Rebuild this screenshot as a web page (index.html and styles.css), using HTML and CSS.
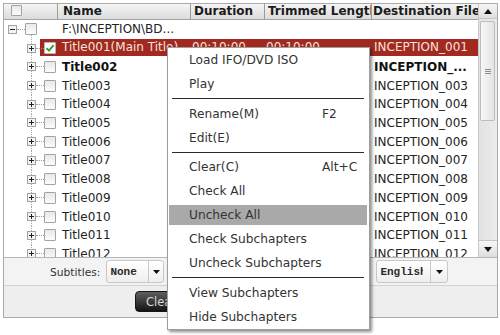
FILE: index.html
```html
<!DOCTYPE html>
<html>
<head>
<meta charset="utf-8">
<title>Titles</title>
<link rel="stylesheet" href="styles.css">
</head>
<body>
<div class="panel">
  <div class="grid">
    <div class="table">
      <div class="head">
        <div class="hc hc-check"><span class="cb"></span></div>
        <div class="hc">Name</div>
        <div class="hc">Duration</div>
        <div class="hc">Trimmed Length</div>
        <div class="hc">Destination File</div>
      </div>
      <div class="rows">
        <div class="row root">
          <div class="c0"><svg class="tg" width="9" height="9" viewBox="0 0 9 9"><rect x=".5" y=".5" width="8" height="8" fill="#f3f3f3" stroke="#a2a2a2"/><path d="M2 4.5h5" stroke="#222"/></svg><span class="dash"></span><span class="cb"></span></div>
          <div class="c name">F:\INCEPTION\BD...</div>
          <div class="c"></div><div class="c"></div><div class="c"></div>
        </div>
        <div class="row child sel">
          <div class="c0"><svg class="tg" width="9" height="9" viewBox="0 0 9 9"><rect x=".5" y=".5" width="8" height="8" fill="#f3f3f3" stroke="#a2a2a2"/><path d="M2 4.5h5M4.5 2v5" stroke="#222"/></svg><span class="dash"></span><span class="cb on"><svg width="10" height="10" viewBox="0 0 10 10"><path d="M1.6 5.2 L4 7.6 L8.6 2.2" stroke="#3f9e2e" stroke-width="2" fill="none"/></svg></span></div>
          <div class="c name">Title001(Main Title)</div>
          <div class="c">00:10:00</div>
          <div class="c">00:10:00</div>
          <div class="c dest">INCEPTION_001</div>
        </div>
        <div class="row child bold">
          <div class="c0"><svg class="tg" width="9" height="9" viewBox="0 0 9 9"><rect x=".5" y=".5" width="8" height="8" fill="#f3f3f3" stroke="#a2a2a2"/><path d="M2 4.5h5M4.5 2v5" stroke="#222"/></svg><span class="dash"></span><span class="cb"></span></div>
          <div class="c name">Title002</div><div class="c"></div><div class="c"></div>
          <div class="c dest">INCEPTION_...</div>
        </div>
        <div class="row child">
          <div class="c0"><svg class="tg" width="9" height="9" viewBox="0 0 9 9"><rect x=".5" y=".5" width="8" height="8" fill="#f3f3f3" stroke="#a2a2a2"/><path d="M2 4.5h5M4.5 2v5" stroke="#222"/></svg><span class="dash"></span><span class="cb"></span></div>
          <div class="c name">Title003</div><div class="c"></div><div class="c"></div>
          <div class="c dest">INCEPTION_003</div>
        </div>
        <div class="row child">
          <div class="c0"><svg class="tg" width="9" height="9" viewBox="0 0 9 9"><rect x=".5" y=".5" width="8" height="8" fill="#f3f3f3" stroke="#a2a2a2"/><path d="M2 4.5h5M4.5 2v5" stroke="#222"/></svg><span class="dash"></span><span class="cb"></span></div>
          <div class="c name">Title004</div><div class="c"></div><div class="c"></div>
          <div class="c dest">INCEPTION_004</div>
        </div>
        <div class="row child">
          <div class="c0"><svg class="tg" width="9" height="9" viewBox="0 0 9 9"><rect x=".5" y=".5" width="8" height="8" fill="#f3f3f3" stroke="#a2a2a2"/><path d="M2 4.5h5M4.5 2v5" stroke="#222"/></svg><span class="dash"></span><span class="cb"></span></div>
          <div class="c name">Title005</div><div class="c"></div><div class="c"></div>
          <div class="c dest">INCEPTION_005</div>
        </div>
        <div class="row child">
          <div class="c0"><svg class="tg" width="9" height="9" viewBox="0 0 9 9"><rect x=".5" y=".5" width="8" height="8" fill="#f3f3f3" stroke="#a2a2a2"/><path d="M2 4.5h5M4.5 2v5" stroke="#222"/></svg><span class="dash"></span><span class="cb"></span></div>
          <div class="c name">Title006</div><div class="c"></div><div class="c"></div>
          <div class="c dest">INCEPTION_006</div>
        </div>
        <div class="row child">
          <div class="c0"><svg class="tg" width="9" height="9" viewBox="0 0 9 9"><rect x=".5" y=".5" width="8" height="8" fill="#f3f3f3" stroke="#a2a2a2"/><path d="M2 4.5h5M4.5 2v5" stroke="#222"/></svg><span class="dash"></span><span class="cb"></span></div>
          <div class="c name">Title007</div><div class="c"></div><div class="c"></div>
          <div class="c dest">INCEPTION_007</div>
        </div>
        <div class="row child">
          <div class="c0"><svg class="tg" width="9" height="9" viewBox="0 0 9 9"><rect x=".5" y=".5" width="8" height="8" fill="#f3f3f3" stroke="#a2a2a2"/><path d="M2 4.5h5M4.5 2v5" stroke="#222"/></svg><span class="dash"></span><span class="cb"></span></div>
          <div class="c name">Title008</div><div class="c"></div><div class="c"></div>
          <div class="c dest">INCEPTION_008</div>
        </div>
        <div class="row child">
          <div class="c0"><svg class="tg" width="9" height="9" viewBox="0 0 9 9"><rect x=".5" y=".5" width="8" height="8" fill="#f3f3f3" stroke="#a2a2a2"/><path d="M2 4.5h5M4.5 2v5" stroke="#222"/></svg><span class="dash"></span><span class="cb"></span></div>
          <div class="c name">Title009</div><div class="c"></div><div class="c"></div>
          <div class="c dest">INCEPTION_009</div>
        </div>
        <div class="row child">
          <div class="c0"><svg class="tg" width="9" height="9" viewBox="0 0 9 9"><rect x=".5" y=".5" width="8" height="8" fill="#f3f3f3" stroke="#a2a2a2"/><path d="M2 4.5h5M4.5 2v5" stroke="#222"/></svg><span class="dash"></span><span class="cb"></span></div>
          <div class="c name">Title010</div><div class="c"></div><div class="c"></div>
          <div class="c dest">INCEPTION_010</div>
        </div>
        <div class="row child">
          <div class="c0"><svg class="tg" width="9" height="9" viewBox="0 0 9 9"><rect x=".5" y=".5" width="8" height="8" fill="#f3f3f3" stroke="#a2a2a2"/><path d="M2 4.5h5M4.5 2v5" stroke="#222"/></svg><span class="dash"></span><span class="cb"></span></div>
          <div class="c name">Title011</div><div class="c"></div><div class="c"></div>
          <div class="c dest">INCEPTION_011</div>
        </div>
        <div class="row child">
          <div class="c0"><svg class="tg" width="9" height="9" viewBox="0 0 9 9"><rect x=".5" y=".5" width="8" height="8" fill="#f3f3f3" stroke="#a2a2a2"/><path d="M2 4.5h5M4.5 2v5" stroke="#222"/></svg><span class="dash"></span><span class="cb"></span></div>
          <div class="c name">Title012</div><div class="c"></div><div class="c"></div>
          <div class="c dest">INCEPTION_012</div>
        </div>
        <div class="row child">
          <div class="c0"><svg class="tg" width="9" height="9" viewBox="0 0 9 9"><rect x=".5" y=".5" width="8" height="8" fill="#f3f3f3" stroke="#a2a2a2"/><path d="M2 4.5h5M4.5 2v5" stroke="#222"/></svg><span class="dash"></span><span class="cb"></span></div>
          <div class="c name">Title013</div><div class="c"></div><div class="c"></div>
          <div class="c dest">INCEPTION_013</div>
        </div>
      </div>
    </div>
    <div class="vscroll">
      <div class="sbtn"><svg width="8" height="5" viewBox="0 0 8 5"><polygon points="0,5 8,5 4,0" fill="#111"/></svg></div>
      <div class="track">
        <div class="thumb"><svg width="6" height="5" viewBox="0 0 6 5"><path d="M0 .5h6M0 2.5h6M0 4.5h6" stroke="#8c8c8c"/></svg></div>
      </div>
      <div class="sbtn down"><svg width="8" height="5" viewBox="0 0 8 5"><polygon points="0,0 8,0 4,5" fill="#111"/></svg></div>
    </div>
  </div>
  <div class="toolbar">
    <span class="lbl">Subtitles:</span>
    <div class="dd dd-sub"><div class="dd-val"><span>None</span></div><div class="dd-arr"><svg width="7" height="4" viewBox="0 0 7 4"><polygon points="0,0 7,0 3.5,4" fill="#111"/></svg></div></div>
    <div class="dd dd-aud"><div class="dd-val"><span>English</span></div><div class="dd-arr"><svg width="7" height="4" viewBox="0 0 7 4"><polygon points="0,0 7,0 3.5,4" fill="#111"/></svg></div></div>
  </div>
  <div class="actions">
    <button class="btn">Clear</button>
  </div>
</div>

<div class="menu">
  <div class="mi"><span>Load IFO/DVD ISO</span></div>
  <div class="mi"><span>Play</span></div>
  <div class="msep"></div>
  <div class="mi"><span>Rename(M)</span><span>F2</span></div>
  <div class="mi"><span>Edit(E)</span></div>
  <div class="msep"></div>
  <div class="mi"><span>Clear(C)</span><span>Alt+C</span></div>
  <div class="mi"><span>Check All</span></div>
  <div class="mi hot"><span>Uncheck All</span></div>
  <div class="mi"><span>Check Subchapters</span></div>
  <div class="mi"><span>Uncheck Subchapters</span></div>
  <div class="msep"></div>
  <div class="mi"><span>View Subchapters</span></div>
  <div class="mi"><span>Hide Subchapters</span></div>
</div>
</body>
</html>
```

FILE: styles.css
```css
* { box-sizing: border-box; }
html, body { margin: 0; padding: 0; background: #fff; }
body {
  width: 500px; height: 335px; overflow: hidden; position: relative;
  font-family: "DejaVu Sans", Verdana, sans-serif; color: #222;
}
.panel {
  margin: 3px; width: 495px; height: 315px;
  border: 1px solid #aaaaaa; background: #f1f1f1;
  display: flex; flex-direction: column;
}
.grid { display: flex; height: 254px; border-bottom: 1px solid #b6b6b6; background: #fff; }
.table { width: 474px; display: flex; flex-direction: column; overflow: hidden; }

.head {
  display: grid; grid-template-columns: 53px 133px 74px 107px 107px;
  height: 16px; border-bottom: 1px solid #a4a4a4;
  background: linear-gradient(#f5f5f5, #dcdcdc);
}
.hc {
  font-weight: bold; font-size: 12px; line-height: 15px; color: #1c1c1c;
  border-left: 1px solid #9c9c9c; white-space: nowrap; overflow: hidden;
  padding-left: 3px;
}
.hc:nth-child(2) { padding-left: 5px; }
.hc:nth-child(3) { padding-left: 3px; }
.hc:nth-child(5) { padding-left: 1px; }
.hc-check { border-left: 0; padding: 1px 0 0 7px; display: flex; align-items: flex-start; }
.hc-check .cb { width: 11px; height: 11px; }

.rows { flex: 1; overflow: hidden; }
.row {
  display: grid; grid-template-columns: 53px 133px 74px 107px 107px;
  height: 18.72px; font-size: 12px;
}
.c { display: flex; align-items: center; white-space: nowrap; overflow: hidden; color: #232323; padding-left: 2px; }
.c.name { padding-left: 5px; }
.c.dest { padding-left: 3px; }
.bold .c { font-weight: bold; color: #111; }

.c0 { display: flex; align-items: center; }
.tg { flex: none; display: block; }
.dash { width: 8px; height: 0; border-top: 1px dotted #9c9c9c; flex: none; }
.cb {
  width: 12px; height: 12px; flex: none; display: flex; align-items: center; justify-content: center;
  border: 1px solid #a3a3a3; border-radius: 1px;
  background: linear-gradient(#e9e9e9, #fbfbfb);
}
.cb.on { background: #fff; border-color: #b8b8b8; }

.root .c0 {
  padding-left: 4px;
  background: repeating-linear-gradient(to bottom, #a8a8a8 0 1px, transparent 1px 2px) 27px 15px / 1px 100% no-repeat;
}
.child .c0 {
  padding-left: 23px;
  background: repeating-linear-gradient(to bottom, #a8a8a8 0 1px, transparent 1px 2px) 27px 0 / 1px 100% no-repeat;
}
.sel .c0 {
  background:
    linear-gradient(#a1291f, #a1291f) 36px 0 / 17px 17px no-repeat,
    repeating-linear-gradient(to bottom, #a8a8a8 0 1px, transparent 1px 2px) 27px 0 / 1px 100% no-repeat;
}
.sel .c {
  background: linear-gradient(#a1291f, #a1291f) 0 0 / 100% 17px no-repeat;
  color: #f6e2dc; align-items: flex-start; padding-top: 1px;
}

.vscroll {
  width: 19px; display: flex; flex-direction: column;
  border-left: 1px solid #c9c9c9; background: #e7e7e7;
}
.sbtn {
  height: 15px; display: flex; align-items: center; justify-content: center;
  background: linear-gradient(#f6f6f6, #dedede); border-bottom: 1px solid #c4c4c4;
}
.sbtn.down { height: 17px; border-bottom: 0; border-top: 1px solid #c4c4c4; }
.track { flex: 1; padding: 2px 2px 0 1px; background: linear-gradient(90deg, #e2e2e2, #ececec); }
.thumb {
  height: 100px; border: 1px solid #bdbdbd; border-radius: 2px;
  background: linear-gradient(90deg, #f7f7f7, #e4e4e4);
  display: flex; align-items: center; justify-content: center;
}

.toolbar {
  height: 28px; display: flex; align-items: center;
  padding-left: 46px; border-bottom: 1px solid #d2d2d2; background: #f3f3f3;
}
.lbl { font-size: 10.7px; color: #333; margin-right: 6px; padding-top: 2px; }
.dd {
  display: flex; height: 23px; border: 1px solid #c8c8c8; border-radius: 3px;
  background: linear-gradient(#ffffff, #eeeeee);
}
.dd-val {
  display: flex; align-items: center; padding: 1px 4px 0 3px;
  font-family: "Liberation Mono", "Courier New", monospace; font-weight: bold; font-size: 11px; color: #2a2a2a;
}
.dd-val span { display: block; overflow: hidden; white-space: nowrap; }
.dd-arr { border-left: 1px solid #c8c8c8; display: flex; align-items: center; justify-content: center; }
.dd-sub { width: 58px; }
.dd-sub .dd-val { width: 41px; }
.dd-sub .dd-arr { width: 16px; }
.dd-aud { width: 72px; margin-left: 212px; }
.dd-aud .dd-val { width: 53px; padding-right: 7px; }
.dd-aud .dd-arr { width: 18px; }

.actions { flex: 1; display: flex; align-items: center; padding-left: 131px; background: #eeeeee; }
.btn {
  height: 21px; width: 70px; padding: 0 0 0 10px; text-align: left;
  border: 1px solid #161616; border-radius: 4px;
  background: linear-gradient(#5e5e5e, #141414);
  color: #d8d8d8; font-family: "DejaVu Sans", Verdana, sans-serif; font-size: 11.5px;
}

.menu {
  position: absolute; left: 167px; top: 47px; width: 203px; height: 283px;
  background: #fff; border: 1px solid #9e9e9e;
  box-shadow: 2px 2px 3px rgba(0, 0, 0, 0.45);
  font-size: 12.2px; color: #333;
  display: flex; flex-direction: column;
}
.mi {
  height: 20px; flex: none; margin: 2px 2px 2px 1px; padding-left: 20px;
  display: grid; grid-template-columns: 133px auto; align-items: center;
  white-space: nowrap;
}
.mi.hot { background: #a9a9a9; }
.msep { height: 5.5px; flex: none; display: flex; align-items: center; padding: 0 5px 0 4px; }
.msep::before { content: ""; display: block; width: 100%; height: 1px; background: #2a2a2a; }
```
